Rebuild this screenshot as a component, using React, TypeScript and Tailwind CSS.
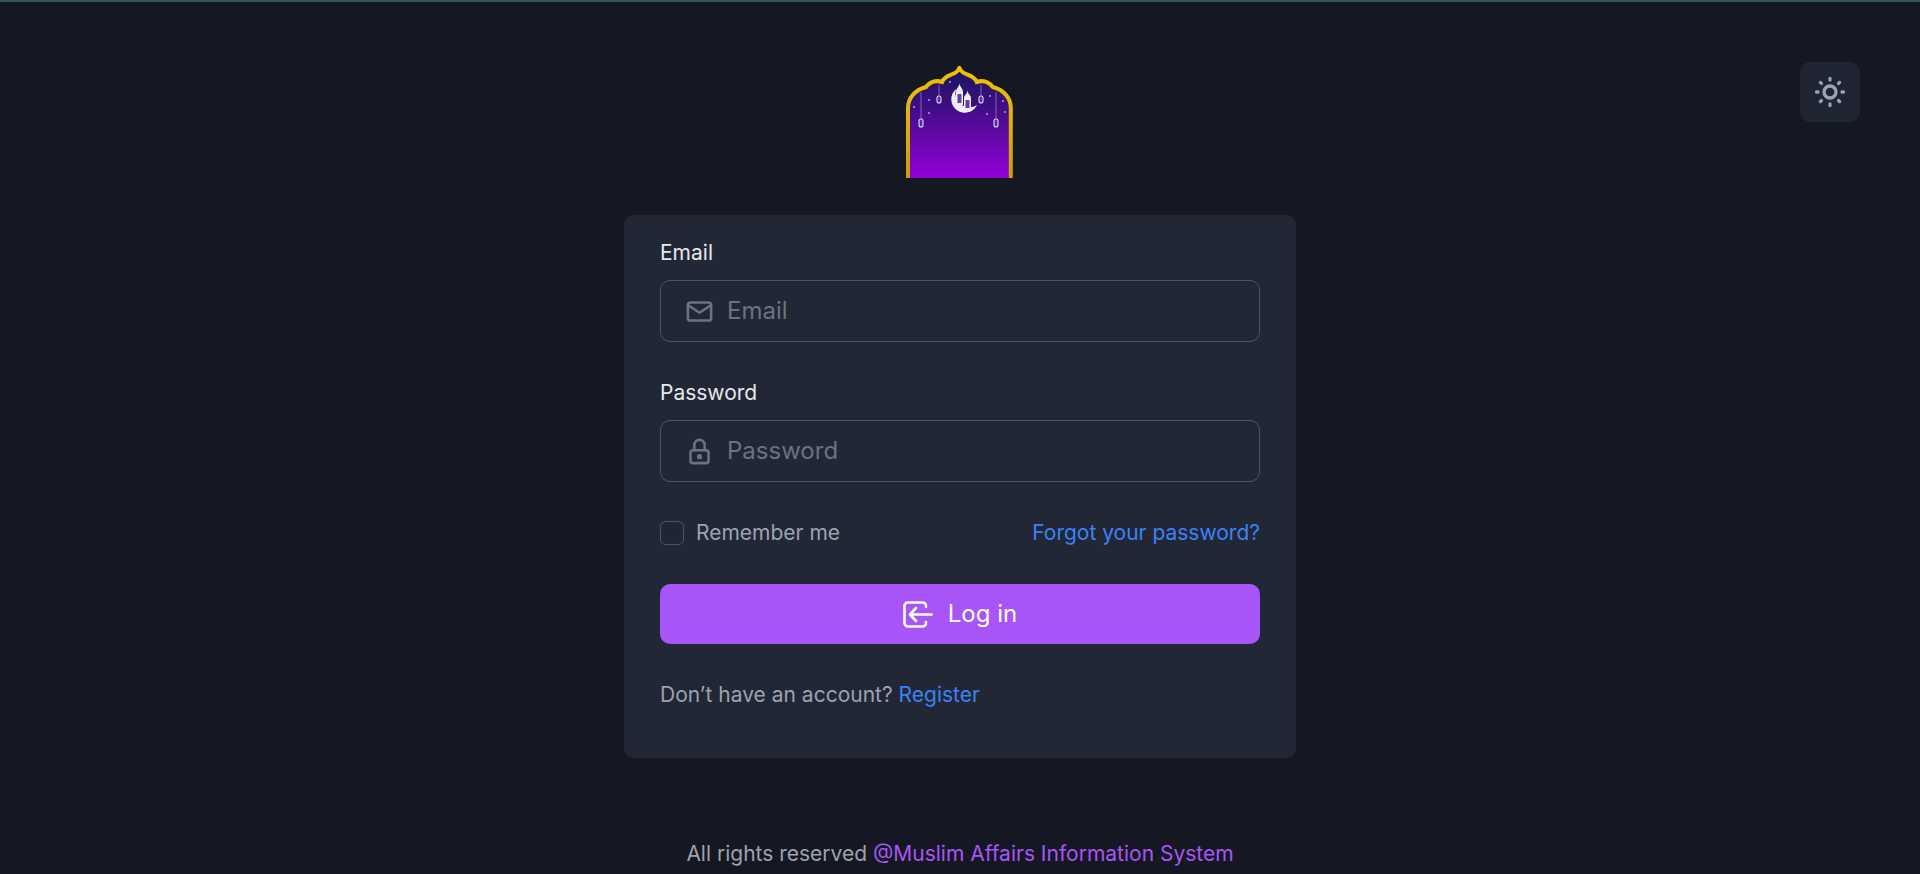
import React from 'react'
import { TbLock, TbMail, TbSun } from 'react-icons/tb'

const Lantern = ({ x, top, bottom, h }: { x: number; top: number; bottom: number; h: number }) => (
  <g>
    <line x1={x} y1={top} x2={x} y2={bottom - h} stroke="#8f7fc0" strokeWidth="0.8" />
    <rect x={x - 2} y={bottom - h} width="4" height={h} rx="2" fill="#5a2a9a" stroke="#e0d9f2" strokeWidth="1.1" />
  </g>
)

const Logo = () => (
  <svg width="108" height="112" viewBox="0 0 108 112" className="block">
    <defs>
      <linearGradient id="arch" x1="0" y1="0" x2="0" y2="1">
        <stop offset="0" stopColor="#15185a" />
        <stop offset="0.35" stopColor="#3f0d85" />
        <stop offset="1" stopColor="#9400d8" />
      </linearGradient>
      <linearGradient id="gold" x1="0" y1="0" x2="0" y2="1">
        <stop offset="0" stopColor="#f2c200" />
        <stop offset="0.4" stopColor="#e2b30a" />
        <stop offset="1" stopColor="#c79c10" />
      </linearGradient>
    </defs>
    <path
      d="M2 112 V42 C2 32 9 24 20 21 C24 16 30 14 36 16 C38 10 45 9 49 7 C51 6 52.5 4 53.4 2 C54.3 4 55.8 6 57.8 7 C61.8 9 68.8 10 70.8 16 C76.8 14 82.8 16 86.8 21 C97.8 24 104.8 32 104.8 42 V112"
      fill="url(#arch)"
      stroke="url(#gold)"
      strokeWidth="4"
    />
    <Lantern x={15} top={26} bottom={61} h={8} />
    <Lantern x={33} top={19} bottom={37} h={7} />
    <Lantern x={75} top={19} bottom={37} h={7} />
    <Lantern x={90} top={26} bottom={61} h={8} />
    <g fill="#a79ad0">
      <circle cx="8" cy="41" r="1.1" />
      <circle cx="23" cy="34" r="1.1" />
      <circle cx="23" cy="47" r="1.1" />
      <circle cx="44" cy="16" r="1.1" />
      <circle cx="84" cy="30" r="1.1" />
      <circle cx="97" cy="35" r="1.1" />
      <circle cx="99" cy="46" r="1.1" />
      <circle cx="81" cy="48" r="1.1" />
    </g>
    <path d="M50 23 A13.5 13.5 0 1 0 71 39 A14 14 0 0 1 50 23 Z" fill="#f1eefb" />
    <path d="M50 39 V26 C50 22 53.5 21 53.5 17 C53.5 21 57 22 57 26 V39 Z" fill="#f1eefb" />
    <path d="M58 43 V32 C58 29 61.5 28 61.5 24 C61.5 28 65 29 65 32 V43 Z" fill="#f1eefb" />
    <path d="M51.5 28 H55.5 V37 H51.5 Z M59.5 34 H63.5 V42 H59.5 Z" fill="#6a3aa8" />
  </svg>
)

const LoginIcon = () => (
  <svg width="30" height="27" viewBox="0 0 30 27" fill="none" stroke="currentColor" strokeWidth="2.6" strokeLinecap="round" strokeLinejoin="round">
    <path d="M23 6 V5 A3.5 3.5 0 0 0 19.5 1.5 H5 A3.5 3.5 0 0 0 1.5 5 V22 A3.5 3.5 0 0 0 5 25.5 H19.5 A3.5 3.5 0 0 0 23 22 V21" />
    <path d="M28.5 13.5 H7 M13 7 L7 13.5 L13 20" />
  </svg>
)

const Field = ({ label, placeholder, icon }: { label: string; placeholder: string; icon: React.ReactNode }) => (
  <div>
    <label className="block text-[21px] leading-[25px] text-[#e5e7eb]">{label}</label>
    <div className="mt-[15px] flex h-[62px] items-center gap-[12px] rounded-[10px] border border-[#4b5563] pl-[23px]">
      <span className="text-[#6b7280]">{icon}</span>
      <input
        placeholder={placeholder}
        className="w-full bg-transparent text-[24px] text-white outline-none placeholder:text-[#6b7280]"
      />
    </div>
  </div>
)

export default function App() {
  return (
    <div className="relative flex h-[874px] flex-col items-center overflow-hidden border-t-2 border-[#37545a] bg-[#151822] font-['Inter',sans-serif]">
      <button className="absolute top-[60px] right-[60px] flex h-[60px] w-[60px] items-center justify-center rounded-[10px] bg-[#1f2533] text-[#9ca3af]">
        <TbSun size={36} strokeWidth={2.2} />
      </button>

      <div className="mt-[64px]">
        <Logo />
      </div>

      <div className="mt-[37px] flex h-[543px] w-[672px] flex-col rounded-[10px] bg-[#222736] px-[36px] pt-[25px]">
        <Field label="Email" placeholder="Email" icon={<TbMail size={31} strokeWidth={2} />} />
        <div className="mt-[38px]">
          <Field label="Password" placeholder="Password" icon={<TbLock size={31} strokeWidth={2} />} />
        </div>

        <div className="mt-[39px] flex items-center justify-between">
          <label className="flex items-center gap-[12px]">
            <span className="h-[24px] w-[24px] rounded-[6px] border border-[#4b5563] bg-[#1f2533]" />
            <span className="text-[21px] leading-[24px] text-[#9ca3af]">Remember me</span>
          </label>
          <a className="text-[21px] leading-[24px] text-[#3b82f6]">Forgot your password?</a>
        </div>

        <button className="mt-[39px] flex h-[60px] items-center justify-center gap-[15px] rounded-[10px] bg-[#a855f7] text-[24px] text-white">
          <LoginIcon />
          Log in
        </button>

        <p className="mt-[39px] text-[21px] leading-[24px] text-[#9ca3af]">
          Don’t have an account? <a className="text-[#3b82f6]">Register</a>
        </p>
      </div>

      <p className="mt-[84px] text-[21px] leading-[24px] text-[#9ca3af]">
        All rights reserved <span className="text-[#a855f7]">@Muslim Affairs Information System</span>
      </p>
    </div>
  )
}
